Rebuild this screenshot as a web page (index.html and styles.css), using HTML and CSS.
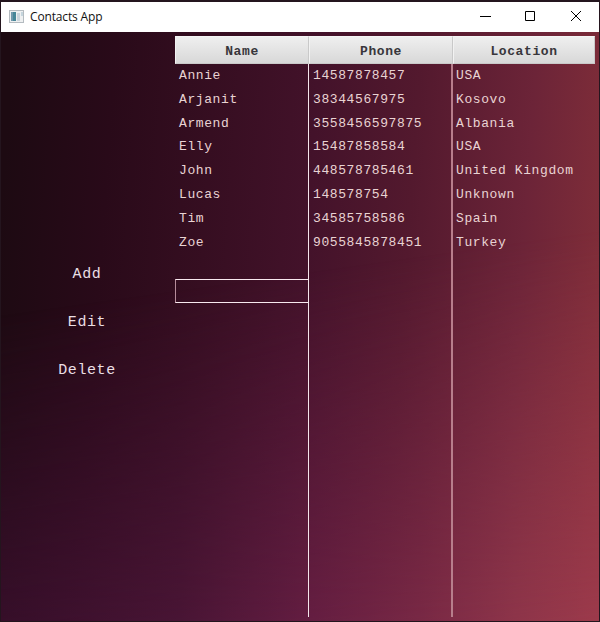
FILE: index.html
```html
<!DOCTYPE html>
<html lang="en">
<head>
<meta charset="utf-8">
<title>Contacts App</title>
<link rel="stylesheet" href="styles.css">
</head>
<body>
<div class="window">
  <header class="titlebar">
    <svg class="app-icon" width="15" height="13" viewBox="0 0 15 13">
      <rect x=".5" y=".5" width="14" height="12" fill="#eef0f1" stroke="#b4bbc0"/>
      <rect x="2" y="2" width="5" height="9" fill="#478798"/>
      <path d="M2 2h2v9H2z" fill="#7199ad"/>
      <rect x="8" y="3" width="3" height="8" fill="#cbd5dc"/>
      <rect x="12" y="2" width="2" height="4" fill="#c5d5dd"/>
    </svg>
    <span class="title">Contacts App</span>
    <svg class="control" width="46" height="30" viewBox="0 0 46 30"><path d="M18 14.5h11"/></svg>
    <svg class="control" width="46" height="30" viewBox="0 0 46 30"><path d="M17.5 9.5h9v9h-9z"/></svg>
    <svg class="control" width="46" height="30" viewBox="0 0 46 30"><path d="M17 9l10 10M27 9l-10 10"/></svg>
  </header>
  <main class="content">
    <nav class="actions">
      <button>Add</button>
      <button>Edit</button>
      <button>Delete</button>
    </nav>
    <section class="table">
      <div class="column">
        <div class="head">Name</div>
        <div class="cell">Annie</div><div class="cell">Arjanit</div><div class="cell">Armend</div><div class="cell">Elly</div><div class="cell">John</div><div class="cell">Lucas</div><div class="cell">Tim</div><div class="cell">Zoe</div>
        <div class="cell focused"></div>
      </div>
      <div class="column">
        <div class="head">Phone</div>
        <div class="cell">14587878457</div><div class="cell">38344567975</div><div class="cell">3558456597875</div><div class="cell">15487858584</div><div class="cell">448578785461</div><div class="cell">148578754</div><div class="cell">34585758586</div><div class="cell">9055845878451</div>
      </div>
      <div class="column">
        <div class="head">Location</div>
        <div class="cell">USA</div><div class="cell">Kosovo</div><div class="cell">Albania</div><div class="cell">USA</div><div class="cell">United Kingdom</div><div class="cell">Unknown</div><div class="cell">Spain</div><div class="cell">Turkey</div>
      </div>
    </section>
  </main>
</div>
</body>
</html>
```

FILE: styles.css
```css
* { box-sizing: border-box; }
body { margin: 0; background: #24151e; }
.window {
  height: 622px;
  padding: 2px 1px 1px;
  background: #24151e;
  display: flex;
  flex-direction: column;
}
.titlebar {
  height: 30px;
  flex: none;
  display: flex;
  align-items: center;
  background: #fff;
  padding-left: 8px;
}
.app-icon { margin-top: -2px; }
.title {
  flex: 1;
  margin-left: 6px;
  font: 12px/16px "Open Sans", "Noto Sans", sans-serif;
  letter-spacing: -0.15px;
  color: #111;
}
.control { fill: none; stroke: #000; stroke-width: 1; }
.control:last-child { margin-right: -1px; }
.content {
  flex: 1;
  position: relative;
  isolation: isolate;
  display: flex;
  padding: 4px 4px 4px 0;
  font-family: "Courier New", "Liberation Mono", monospace;
  background: linear-gradient(94deg, #1d0a12 2%, #290a19 18%, #360e21 34%, #43122a 50%, #53192e 66%, #6c2438 84%, #853039 100%);
}
.content::before {
  content: "";
  position: absolute;
  inset: 0;
  z-index: -1;
  background: linear-gradient(90deg, #3c102f, #4c1638 30%, #681f44 52%, #7a2946 70%, #8e354a 86%, #9c3a4b);
  -webkit-mask-image: linear-gradient(172deg, transparent 42%, #000 100%);
  mask-image: linear-gradient(172deg, transparent 42%, #000 100%);
}
.actions {
  width: 172px;
  margin-right: 2px;
  padding-top: 227px;
  display: flex;
  flex-direction: column;
  align-items: center;
  gap: 24px;
}
.actions button {
  height: 24px;
  padding: 0;
  border: 0;
  background: none;
  font: 15px/24px "Courier New", "Liberation Mono", monospace;
  letter-spacing: 0.6px;
  color: #eadfe4;
}
.table {
  flex: 1;
  display: grid;
  grid-template-columns: 134px 144px 1fr;
}
.column { border-right: 1px solid #f5e5eb; }
.column:nth-child(2) { border-right: 2px solid #b87e8c; }
.column:last-child { border-right: 0; }
.head {
  height: 28px;
  margin-right: -1px;
  border: 1px solid #c9c9c9;
  border-top-color: #f5f5f5;
  border-left-color: #f2f2f2;
  background: linear-gradient(#efefef, #d8d8d8);
  font-size: 13px;
  letter-spacing: 0.6px;
  font-weight: 700;
  line-height: 29px;
  text-align: center;
  color: #38363b;
}
.column:nth-child(2) .head { margin-right: -2px; }
.column:last-child .head { margin-right: 0; }
.cell {
  height: 23.8px;
  padding-left: 4px;
  font-size: 13px;
  letter-spacing: 0.6px;
  line-height: 24px;
  color: #e9d3d3;
}
.column:last-child .cell { padding-left: 3px; }
.focused {
  margin-top: 24.6px;
  height: 24px;
  border: 1px solid #f8e9ef;
  border-left-color: #b68c9a;
  border-right: 0;
}
```
